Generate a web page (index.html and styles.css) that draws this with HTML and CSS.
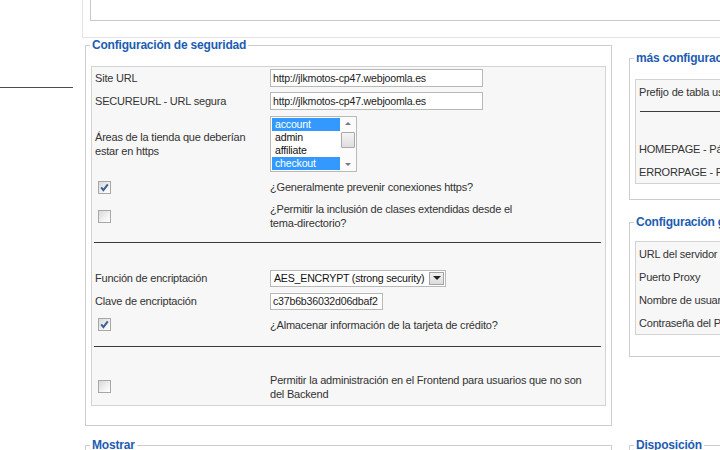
FILE: index.html
```html
<!DOCTYPE html>
<html lang="es">
<head>
<meta charset="utf-8">
<title>Configuración</title>
<link rel="stylesheet" href="styles.css">
</head>
<body>
<div class="page">
  <aside class="side"><div class="side-rule"></div></aside>
  <main class="main">
    <div class="top"><div class="topbox"></div></div>
    <div class="grid">
      <fieldset class="fs fs-sec">
        <legend>Configuración de seguridad</legend>
        <table class="tbl">
          <tr class="r22">
            <td class="l">Site URL</td>
            <td class="v"><input class="inp inp-url" type="text" value="http://jlkmotos-cp47.webjoomla.es"></td>
          </tr>
          <tr class="r23">
            <td class="l">SECUREURL - URL segura</td>
            <td class="v"><input class="inp inp-url" type="text" value="http://jlkmotos-cp47.webjoomla.es"></td>
          </tr>
          <tr class="r63">
            <td class="l">Áreas de la tienda que deberían<br>estar en https</td>
            <td class="v">
              <div class="listbox">
                <div class="opts">
                  <div class="opt sel-opt">account</div>
                  <div class="opt">admin</div>
                  <div class="opt">affiliate</div>
                  <div class="opt sel-opt">checkout</div>
                </div>
                <div class="sbar">
                  <div class="sarrow"><span class="tri-up"></span></div>
                  <div class="strack"><div class="sthumb"></div></div>
                  <div class="sarrow"><span class="tri-down"></span></div>
                </div>
              </div>
            </td>
          </tr>
          <tr class="r24">
            <td class="l"><span class="cb"><svg viewBox="0 0 13 13" width="13" height="13"><path d="M3.2 6.4 L5.4 9.2 L9.8 3.4" fill="none" stroke="#3e5f93" stroke-width="2"/></svg></span></td>
            <td class="v">¿Generalmente prevenir conexiones https?</td>
          </tr>
          <tr class="r34">
            <td class="l"><span class="cb"></span></td>
            <td class="v">¿Permitir la inclusión de clases extendidas desde el<br>tema-directorio?</td>
          </tr>
          <tr class="r19">
            <td class="hr" colspan="2"><div class="rule"></div></td>
          </tr>
          <tr class="r14"><td colspan="2"></td></tr>
          <tr class="r24">
            <td class="l">Función de encriptación</td>
            <td class="v">
              <div class="dropdown">
                <span class="dd-text">AES_ENCRYPT (strong security)</span>
                <span class="dd-btn"><span class="tri-down dark"></span></span>
              </div>
            </td>
          </tr>
          <tr class="r22">
            <td class="l">Clave de encriptación</td>
            <td class="v"><input class="inp inp-key" type="text" value="c37b6b36032d06dbaf2"></td>
          </tr>
          <tr class="r25">
            <td class="l"><span class="cb"><svg viewBox="0 0 13 13" width="13" height="13"><path d="M3.2 6.4 L5.4 9.2 L9.8 3.4" fill="none" stroke="#3e5f93" stroke-width="2"/></svg></span></td>
            <td class="v">¿Almacenar información de la tarjeta de crédito?</td>
          </tr>
          <tr class="r19">
            <td class="hr" colspan="2"><div class="rule"></div></td>
          </tr>
          <tr class="r12"><td colspan="2"></td></tr>
          <tr class="r37">
            <td class="l"><span class="cb"></span></td>
            <td class="v">Permitir la administración en el Frontend para usuarios que no son<br>del Backend</td>
          </tr>
        </table>
      </fieldset>

      <div class="rightcol">
        <fieldset class="fs fs-more">
          <legend>más configuración</legend>
          <table class="tbl tbl-right">
            <tr class="r23"><td class="l">Prefijo de tabla usado por la tienda</td></tr>
            <tr class="r16"><td class="hr"><div class="rule rule-open"></div></td></tr>
            <tr class="r18"><td></td></tr>
            <tr class="r24"><td class="l">HOMEPAGE - Página de inicio</td></tr>
            <tr class="r22"><td class="l">ERRORPAGE - Página de error</td></tr>
          </table>
        </fieldset>
        <fieldset class="fs fs-proxy">
          <legend>Configuración global del Proxy</legend>
          <table class="tbl tbl-right tbl-proxy">
            <tr class="r23"><td class="l">URL del servidor Proxy</td></tr>
            <tr class="r23"><td class="l">Puerto Proxy</td></tr>
            <tr class="r23"><td class="l">Nombre de usuario Proxy</td></tr>
            <tr class="r23"><td class="l">Contraseña del Proxy</td></tr>
          </table>
        </fieldset>
      </div>

      <fieldset class="fs fs-show"><legend>Mostrar</legend></fieldset>
      <fieldset class="fs fs-disp"><legend>Disposición</legend></fieldset>
    </div>
  </main>
</div>
</body>
</html>
```

FILE: styles.css
```css
html, body {
  margin: 0;
  padding: 0;
  background: #ffffff;
}

body {
  width: 720px;
  height: 450px;
  overflow: hidden;
  font-family: "Liberation Sans", Arial, Helvetica, sans-serif;
  font-size: 11px;
  letter-spacing: -0.2px;
  color: #333333;
}

.page {
  display: grid;
  grid-template-columns: 82px 900px;
}

.side-rule {
  margin-top: 87px;
  width: 73px;
  height: 1px;
  background: #4d4d4d;
}

.top {
  height: 37px;
  border-left: 1px solid #e4e4e4;
  border-bottom: 1px solid #e4e4e4;
  padding-left: 7px;
}

.topbox {
  height: 20px;
  border: 1px solid #c9c9c9;
  border-top: none;
}

.grid {
  display: grid;
  grid-template-columns: 527px 260px;
  column-gap: 17px;
  row-gap: 12px;
  padding-left: 3px;
  align-items: start;
}

.fs {
  margin: 0;
  border: 1px solid #cdcdcd;
  padding: 0 5px 19px 5px;
  min-width: 0;
}

.fs legend {
  color: #1d5cb2;
  font-weight: bold;
  font-size: 12px;
  letter-spacing: -0.2px;
  line-height: 14px;
  padding: 0 2px;
  margin-left: -1px;
  white-space: nowrap;
}

.tbl {
  width: 100%;
  margin-top: 14px;
  border: 1px solid #d3d3d3;
  background: #f7f7f7;
  border-collapse: separate;
  border-spacing: 0;
}

.tbl-proxy {
  margin-top: 12px;
}

.tbl td {
  padding: 0;
  vertical-align: middle;
  line-height: 14px;
}

.tbl td.l {
  width: 175px;
  padding-left: 3px;
}

.tbl-right td.l {
  white-space: nowrap;
}

.tbl td.hr {
  padding: 0 4px 0 2px;
}

.rule {
  border-top: 1px solid #3d3d3d;
}

.rule-open {
  margin-left: 2px;
}

.r12 { height: 12px; }
.r14 { height: 14px; }
.r16 { height: 16px; }
.r18 { height: 18px; }
.r19 { height: 19px; }
.r22 { height: 22px; }
.r23 { height: 23px; }
.r24 { height: 24px; }
.r25 { height: 25px; }
.r34 { height: 34px; }
.r37 { height: 37px; }
.r63 { height: 63px; }

.inp {
  display: block;
  box-sizing: border-box;
  height: 18px;
  margin: 0;
  border: 1px solid #b9b9b9;
  background: #ffffff;
  padding: 0 2px;
  font-family: "Liberation Sans", Arial, sans-serif;
  font-size: 10.6px;
  letter-spacing: -0.2px;
  color: #222222;
  outline: none;
}

.inp-url { width: 213px; }
.inp-key { width: 113px; height: 17px; }

.listbox {
  display: flex;
  box-sizing: border-box;
  width: 87px;
  height: 56px;
  border: 1px solid #b9b9b9;
  background: #ffffff;
}

.opts {
  flex: 1;
  padding: 1px 0 0 1px;
}

.opt {
  height: 13px;
  line-height: 13px;
  padding-left: 3px;
  color: #111111;
  font-size: 10.6px;
  letter-spacing: -0.2px;
}

.sel-opt {
  background: #3399ff;
  color: #ffffff;
}

.sbar {
  width: 16px;
  display: flex;
  flex-direction: column;
  background: #fbfbfb;
}

.sarrow {
  height: 13px;
  display: flex;
  align-items: center;
  justify-content: center;
}

.strack {
  flex: 1;
  padding-top: 2px;
}

.sthumb {
  height: 14px;
  margin: 0 1px;
  border: 1px solid #a9a9a9;
  border-radius: 1px;
  background: linear-gradient(#f4f4f4, #dedede);
}

.tri-up {
  width: 0;
  height: 0;
  border-left: 3px solid transparent;
  border-right: 3px solid transparent;
  border-bottom: 3px solid #7a7a7a;
}

.tri-down {
  width: 0;
  height: 0;
  border-left: 3px solid transparent;
  border-right: 3px solid transparent;
  border-top: 3px solid #7a7a7a;
}

.tri-down.dark {
  border-left-width: 4px;
  border-right-width: 4px;
  border-top: 4px solid #222222;
}

.dropdown {
  display: flex;
  align-items: center;
  box-sizing: border-box;
  width: 176px;
  height: 17px;
  border: 1px solid #b9b9b9;
  background: #ffffff;
}

.dd-text {
  flex: 1;
  padding-left: 3px;
  font-size: 10.6px;
  letter-spacing: -0.2px;
  color: #111111;
  white-space: nowrap;
}

.dd-btn {
  box-sizing: border-box;
  width: 15px;
  height: 13px;
  margin-right: 1px;
  border: 1px solid #a4a4a4;
  background: linear-gradient(#f2f2f2, #dcdcdc);
  display: flex;
  align-items: center;
  justify-content: center;
}

.cb {
  display: block;
  box-sizing: border-box;
  width: 13px;
  height: 13px;
  margin-left: 3px;
  border: 1px solid #a7a7a7;
  background: linear-gradient(135deg, #d9d9d9, #f6f6f6 70%, #ffffff);
}

.cb svg {
  display: block;
  margin: -1px 0 0 -1px;
}

.rightcol {
  margin-top: 13px;
}

.fs-more {
  padding-bottom: 15px;
}

.fs-proxy {
  margin-top: 15px;
  padding-bottom: 21px;
}

.fs-show, .fs-disp {
  height: 40px;
}
```
